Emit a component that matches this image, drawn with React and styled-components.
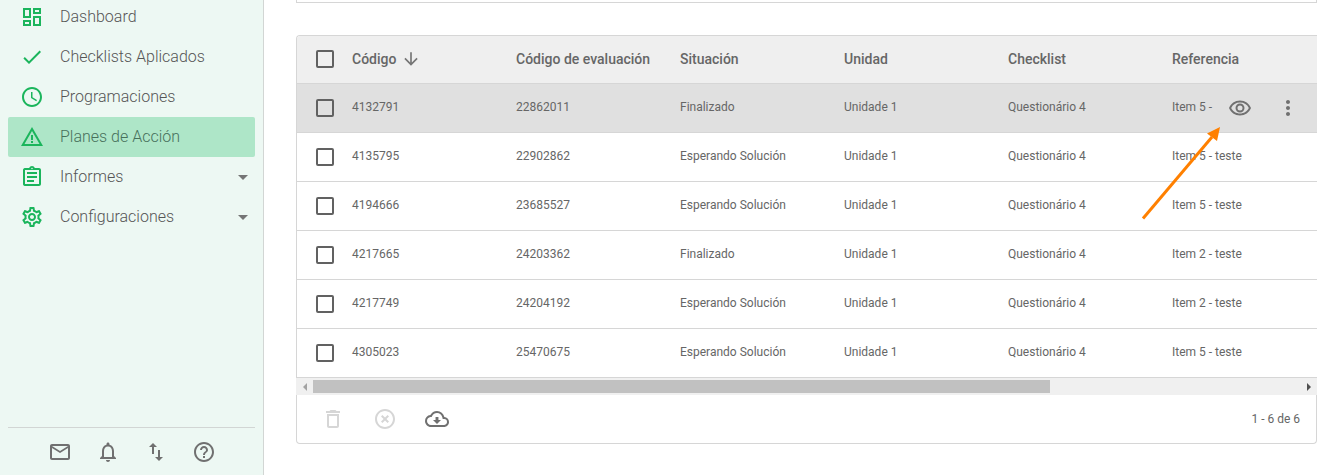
import React, { useState } from "react";
import styled, { createGlobalStyle } from "styled-components";
import {
  MdOutlineDashboard,
  MdCheck,
  MdSchedule,
  MdWarningAmber,
  MdOutlineAssignment,
  MdOutlineSettings,
  MdArrowDropDown,
  MdMailOutline,
  MdNotificationsNone,
  MdImportExport,
  MdHelpOutline,
  MdArrowDownward,
  MdOutlineRemoveRedEye,
  MdMoreVert,
  MdDeleteOutline,
  MdHighlightOff,
  MdOutlineCloudDownload,
} from "react-icons/md";

const menuItems = [
  { label: "Dashboard", icon: MdOutlineDashboard },
  { label: "Checklists Aplicados", icon: MdCheck },
  { label: "Programaciones", icon: MdSchedule },
  { label: "Planes de Acción", icon: MdWarningAmber },
  { label: "Informes", icon: MdOutlineAssignment, expandable: true },
  { label: "Configuraciones", icon: MdOutlineSettings, expandable: true },
];

const shortcuts = [
  { label: "Mensajes", icon: MdMailOutline },
  { label: "Notificaciones", icon: MdNotificationsNone },
  { label: "Importar y exportar", icon: MdImportExport },
  { label: "Ayuda", icon: MdHelpOutline },
];

const columns = [
  "Código",
  "Código de evaluación",
  "Situación",
  "Unidad",
  "Checklist",
  "Referencia",
];

const plans = [
  ["4132791", "22862011", "Finalizado", "Unidade 1", "Questionário 4", "Item 5 - teste"],
  ["4135795", "22902862", "Esperando Solución", "Unidade 1", "Questionário 4", "Item 5 - teste"],
  ["4194666", "23685527", "Esperando Solución", "Unidade 1", "Questionário 4", "Item 5 - teste"],
  ["4217665", "24203362", "Finalizado", "Unidade 1", "Questionário 4", "Item 2 - teste"],
  ["4217749", "24204192", "Esperando Solución", "Unidade 1", "Questionário 4", "Item 2 - teste"],
  ["4305023", "25470675", "Esperando Solución", "Unidade 1", "Questionário 4", "Item 5 - teste"],
];

const App = () => {
  const [active, setActive] = useState("Planes de Acción");
  const [selected, setSelected] = useState([]);

  const toggleRow = (id) => {
    if (selected.includes(id)) {
      setSelected(selected.filter((item) => item !== id));
    } else {
      setSelected([...selected, id]);
    }
  };

  const toggleAll = () => {
    setSelected(selected.length === plans.length ? [] : plans.map((p) => p[0]));
  };

  return (
    <>
      <GlobalStyle />
      <Layout>
        <Sidebar>
          <Menu>
            {menuItems.map(({ label, icon: Icon, expandable }) => (
              <MenuLink
                key={label}
                href="#"
                $active={label === active}
                onClick={() => setActive(label)}
              >
                <Icon className="icon" />
                <span>{label}</span>
                {expandable && <MdArrowDropDown className="caret" />}
              </MenuLink>
            ))}
          </Menu>
          <Shortcuts>
            {shortcuts.map(({ label, icon: Icon }) => (
              <IconButton key={label} aria-label={label}>
                <Icon />
              </IconButton>
            ))}
          </Shortcuts>
        </Sidebar>

        <Main>
          <FilterPanel />

          <Card>
            <TableScroll>
              <Table>
                <thead>
                  <tr>
                    <CheckHead>
                      <Checkbox
                        type="checkbox"
                        aria-label="Seleccionar todo"
                        checked={selected.length === plans.length}
                        onChange={toggleAll}
                      />
                    </CheckHead>
                    {columns.map((column, index) => (
                      <Head key={column} $last={index === columns.length - 1}>
                        <HeadLabel>
                          {column}
                          {index === 0 && <MdArrowDownward />}
                        </HeadLabel>
                      </Head>
                    ))}
                    <ActionsHead />
                  </tr>
                </thead>
                <tbody>
                  {plans.map((plan, index) => (
                    <Row key={plan[0]} $hovered={index === 0}>
                      <CheckCell>
                        <Checkbox
                          type="checkbox"
                          aria-label={plan[0]}
                          checked={selected.includes(plan[0])}
                          onChange={() => toggleRow(plan[0])}
                        />
                      </CheckCell>
                      {plan.map((value, i) => (
                        <Cell key={i}>{value}</Cell>
                      ))}
                      <ActionsCell>
                        {index === 0 && (
                          <Actions>
                            <IconButton aria-label="Visualizar">
                              <MdOutlineRemoveRedEye />
                            </IconButton>
                            <IconButton aria-label="Más opciones">
                              <MdMoreVert />
                            </IconButton>
                          </Actions>
                        )}
                      </ActionsCell>
                    </Row>
                  ))}
                </tbody>
              </Table>
            </TableScroll>

            <Scrollbar>
              <ScrollButton aria-label="Izquierda" disabled>
                <svg width="4" height="8" viewBox="0 0 4 8">
                  <path d="M4 0v8L0 4z" />
                </svg>
              </ScrollButton>
              <ScrollThumb />
              <ScrollRest />
              <ScrollButton aria-label="Derecha">
                <svg width="4" height="8" viewBox="0 0 4 8">
                  <path d="M0 0v8l4-4z" />
                </svg>
              </ScrollButton>
            </Scrollbar>

            <CardFooter>
              <FooterActions>
                <IconButton aria-label="Eliminar" disabled>
                  <MdDeleteOutline />
                </IconButton>
                <IconButton aria-label="Cancelar" disabled>
                  <MdHighlightOff />
                </IconButton>
                <IconButton aria-label="Descargar">
                  <MdOutlineCloudDownload />
                </IconButton>
              </FooterActions>
              <span>1 - 6 de 6</span>
            </CardFooter>

            <Pointer width="84" height="98" viewBox="0 0 84 98">
              <path d="M3 93.500L72 12" />
              <polygon points="80,2 77,16 67,8.500" />
            </Pointer>
          </Card>
        </Main>
      </Layout>
    </>
  );
};

const GlobalStyle = createGlobalStyle`
  * {
    box-sizing: border-box;
  }

  body {
    margin: 0;
    background: #fff;
    color: #666;
    font-family: Roboto, "Liberation Sans", sans-serif;
    overflow: hidden;
  }
`;

const Layout = styled.div`
  display: flex;
  height: 100vh;
`;

const Sidebar = styled.aside`
  display: flex;
  flex-direction: column;
  justify-content: space-between;
  flex: 0 0 264px;
  padding: 0 8px;
  border-right: 1px solid #d2d6d4;
  background: #edf8f3;
`;

/* the list is scrolled a little past its top edge */
const Menu = styled.nav`
  margin-top: -3px;
`;

const MenuLink = styled.a`
  display: flex;
  align-items: center;
  height: 40px;
  padding: 0 0 0 12px;
  border-radius: 2px;
  background: ${(props) => (props.$active ? "#aee6c8" : "transparent")};
  color: ${(props) => (props.$active ? "#47705b" : "#555")};
  font-size: 16px;
  font-weight: 300;
  text-decoration: none;

  span {
    flex: 1;
    margin-left: 16px;
    padding-bottom: 2px;
  }

  .icon {
    width: 24px;
    height: 24px;
    color: #1bb55c;
  }

  .caret {
    width: 24px;
    height: 24px;
    color: #757575;
  }
`;

const Shortcuts = styled.div`
  display: flex;
  justify-content: center;
  gap: 24px;
  padding: 12px 0 11px;
  border-top: 1px solid #d2d6d4;
`;

const IconButton = styled.button`
  display: flex;
  padding: 0;
  border: none;
  background: none;
  color: #707070;
  cursor: pointer;

  svg {
    width: 24px;
    height: 24px;
  }

  &:disabled {
    color: #d6d6d6;
    cursor: default;
  }
`;

const Main = styled.main`
  flex: 1;
  min-width: 0;
  padding: 0 27px 0 32px;
`;

const FilterPanel = styled.section`
  height: 3px;
  margin-bottom: 32px;
  border: 1px solid #d6d6d6;
  border-top: none;
`;

const Card = styled.section`
  position: relative;
`;

const TableScroll = styled.div`
  overflow: hidden;
  border: 1px solid #d6d6d6;
  border-width: 1px 0 0 1px;
  border-top-left-radius: 4px;
`;

const Table = styled.table`
  width: 1366px;
  table-layout: fixed;
  border-spacing: 0;
  text-align: left;
`;

const Head = styled.th`
  width: ${(props) => (props.$last ? "auto" : "164px")};
  height: 48px;
  padding: 0 0 2px;
  border-bottom: 1px solid #d6d6d6;
  background: #efefef;
  font-size: 14px;
  font-weight: 500;
`;

const CheckHead = styled(Head)`
  width: 55px;
  padding-left: 19px;
`;

const ActionsHead = styled(Head).attrs({ as: "td" })`
  width: 103px;
`;

const HeadLabel = styled.span`
  display: flex;
  align-items: center;
  gap: 5px;

  svg {
    width: 20px;
    height: 20px;
    color: #757575;
  }
`;

const Cell = styled.td`
  height: 49px;
  padding: 0 0 2px;
  border-bottom: 1px solid #d6d6d6;
  font-size: 12px;
  white-space: nowrap;
`;

const CheckCell = styled(Cell)`
  padding: 0 0 0 19px;
`;

const ActionsCell = styled(Cell)`
  position: sticky;
  right: 0;
  padding: 0;
`;

const Row = styled.tr`
  background: ${(props) => (props.$hovered ? "#e0e0e0" : "#fff")};

  ${ActionsCell} {
    background: ${(props) => (props.$hovered ? "#e0e0e0" : "transparent")};
  }
`;

const Actions = styled.div`
  display: flex;
  gap: 24px;
  padding-left: 14px;
`;

const Checkbox = styled.input`
  appearance: none;
  display: block;
  width: 18px;
  height: 18px;
  margin: 0;
  border: 2px solid #616161;
  border-radius: 2px;
  cursor: pointer;

  &:checked {
    border-color: #1bb55c;
    background: #1bb55c;
  }
`;

const Scrollbar = styled.div`
  display: flex;
  align-items: center;
  height: 17px;
  background: #f0f0f0;
`;

const ScrollButton = styled.button`
  display: flex;
  align-items: center;
  justify-content: center;
  flex: 0 0 17px;
  height: 17px;
  padding: 0;
  border: none;
  background: none;

  svg {
    fill: #505050;
  }

  &:disabled svg {
    fill: #a3a3a3;
  }
`;

/* visible width against the hidden rest of the table */
const ScrollThumb = styled.div`
  flex: 1020 0 0;
  height: 13px;
  background: #c1c1c1;
`;

const ScrollRest = styled.div`
  flex: 346 0 0;
`;

const CardFooter = styled.footer`
  display: flex;
  align-items: center;
  justify-content: space-between;
  height: 49px;
  padding: 0 16px 0 24px;
  border: 1px solid #d6d6d6;
  border-top: none;
  border-radius: 0 0 4px 4px;
  font-size: 12px;
`;

const FooterActions = styled.div`
  display: flex;
  gap: 28px;
`;

const Pointer = styled.svg`
  position: absolute;
  top: 90px;
  right: 93px;
  pointer-events: none;

  path {
    stroke: #ff8000;
    stroke-width: 3;
  }

  polygon {
    fill: #ff8000;
  }
`;

export default App;
